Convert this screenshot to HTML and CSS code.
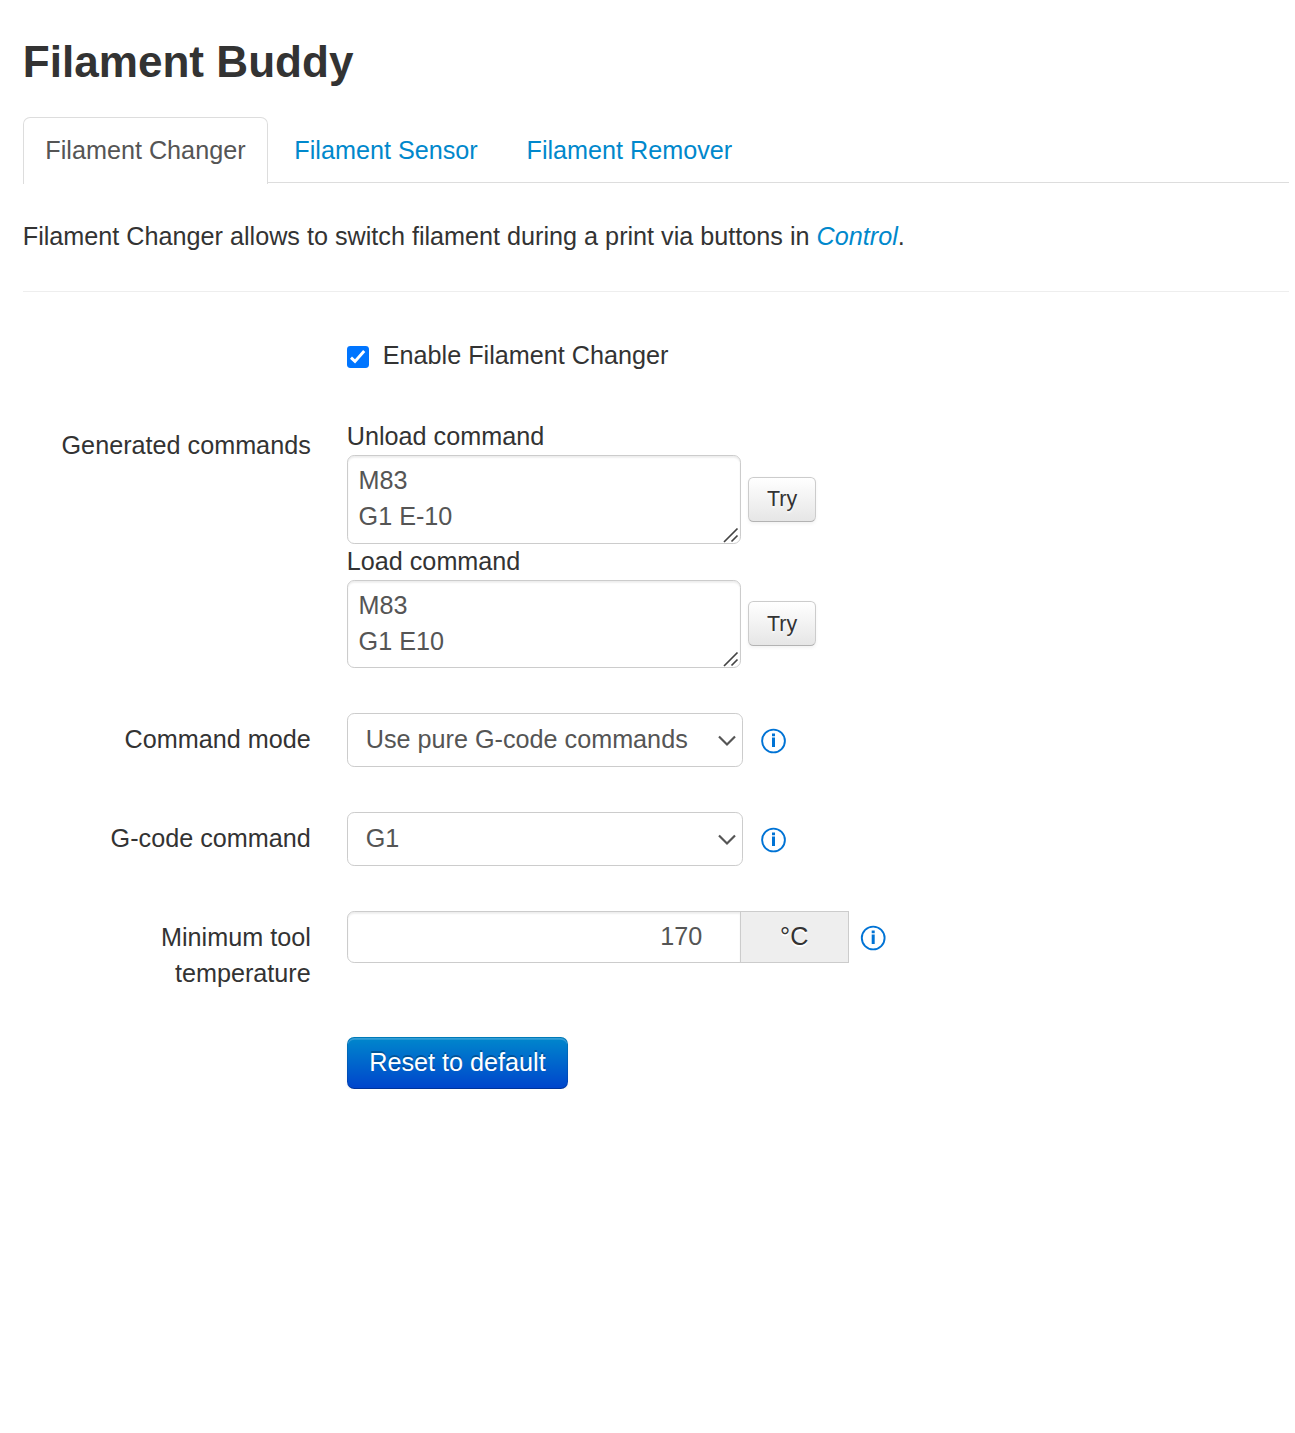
FILE: index.html
```html
<!DOCTYPE html>
<html lang="en">
<head>
<meta charset="utf-8">
<title>Filament Buddy</title>
<link rel="stylesheet" href="styles.css">
</head>
<body>
<main class="settings">
  <h3 class="title">Filament Buddy</h3>
  <ul class="tabs">
    <li><a class="tab tab-active">Filament Changer</a></li>
    <li><a class="tab">Filament Sensor</a></li>
    <li><a class="tab">Filament Remover</a></li>
  </ul>
  <p class="intro">Filament Changer allows to switch filament during a print via buttons in <a class="link">Control</a>.</p>
  <hr class="rule">
  <form class="form">
    <div class="group">
      <span class="label"></span>
      <label class="check">
        <span class="area">
          <input class="checkbox" type="checkbox" checked>
          <svg class="tick" viewBox="0 0 22 22"><path d="M4 11.6 8 15.4 17.2 5"/></svg>
        </span>
        Enable Filament Changer
      </label>
    </div>
    <div class="group">
      <span class="label">Generated commands</span>
      <div class="commands">
        <label class="caption" for="unload">Unload command</label>
        <div class="row">
          <div class="area">
            <textarea class="field textarea" id="unload" rows="2" spellcheck="false">M83
G1 E-10</textarea>
            <svg class="grip" viewBox="0 0 16 16"><path d="M1 15 14.5 1.5M8.5 14.5 14.5 8.5"/></svg>
          </div>
          <button class="btn" type="button">Try</button>
        </div>
        <label class="caption" for="load">Load command</label>
        <div class="row">
          <div class="area">
            <textarea class="field textarea" id="load" rows="2" spellcheck="false">M83
G1 E10</textarea>
            <svg class="grip" viewBox="0 0 16 16"><path d="M1 15 14.5 1.5M8.5 14.5 14.5 8.5"/></svg>
          </div>
          <button class="btn" type="button">Try</button>
        </div>
      </div>
    </div>
    <div class="group">
      <label class="label" for="mode">Command mode</label>
      <div class="row">
        <div class="area">
          <select class="field select" id="mode"><option>Use pure G-code commands</option></select>
          <svg class="chevron" viewBox="0 0 18 12"><path d="M1 1.5 9 9.5 17 1.5"/></svg>
        </div>
        <svg class="info" viewBox="0 0 26 26"><circle cx="13.5" cy="13" r="11.4"/><path d="M12 5.6h3v2.6h-3zM12 9.6h3V19h-3z"/></svg>
      </div>
    </div>
    <div class="group">
      <label class="label" for="gcode">G-code command</label>
      <div class="row">
        <div class="area">
          <select class="field select" id="gcode"><option>G1</option></select>
          <svg class="chevron" viewBox="0 0 18 12"><path d="M1 1.5 9 9.5 17 1.5"/></svg>
        </div>
        <svg class="info" viewBox="0 0 26 26"><circle cx="13.5" cy="13" r="11.4"/><path d="M12 5.6h3v2.6h-3zM12 9.6h3V19h-3z"/></svg>
      </div>
    </div>
    <div class="group">
      <label class="label" for="temp">Minimum tool temperature</label>
      <div class="row row-top">
        <input class="field number" id="temp" value="170">
        <span class="addon">°C</span>
        <svg class="info info-near" viewBox="0 0 26 26"><circle cx="13.2" cy="13" r="11.4"/><path d="M11.7 5.6h3v2.6h-3zM11.7 9.6h3V19h-3z"/></svg>
      </div>
    </div>
    <div class="group">
      <span class="label"></span>
      <button class="btn btn-primary" type="button">Reset to default</button>
    </div>
  </form>
</main>
</body>
</html>
```
FILE: styles.css
```css
* { box-sizing: border-box; }

body {
  margin: 0;
  background: #fff;
  color: #333;
  font: 25.2px/36px "Liberation Sans", Arial, sans-serif;
}

.settings { padding: 26px 6px 0 22.75px; }

.title {
  margin: 0 0 19px;
  font-size: 44.1px;
  line-height: 72px;
}

.tabs {
  display: flex;
  height: 66px;
  margin: 0 0 35px;
  padding: 0;
  list-style: none;
  border-bottom: 1px solid #ddd;
}

.tab {
  display: block;
  height: 67px;
  margin-right: 3.6px;
  padding: 14.4px 21.6px;
  border: 1px solid transparent;
  border-radius: 7.2px 7.2px 0 0;
  color: #08c;
}

.tab-active {
  background: #fff;
  border-color: #ddd;
  border-bottom: 0;
  color: #555;
}

.intro { margin: 0; }

.link {
  color: #08c;
  font-style: italic;
}

.rule {
  height: 2px;
  margin: 37px 0 36px;
  border: 0;
  border-top: 1px solid #eee;
}

.form {
  display: flex;
  flex-direction: column;
  gap: 36px;
}

.group {
  display: grid;
  grid-template-columns: 288px 1fr;
  column-gap: 36px;
  align-items: start;
  justify-items: start;
}

.label {
  justify-self: end;
  padding: 8px 0 10px;
  text-align: right;
}

.check {
  display: flex;
  align-items: center;
  gap: 14px;
  padding: 8px 0 10px;
}

.area { position: relative; }

.checkbox {
  display: block;
  width: 22px;
  height: 22px;
  margin: 4px 0 0;
  appearance: none;
  border-radius: 3.4px;
  background: #0075ff;
}

.tick {
  position: absolute;
  left: 0;
  bottom: 0;
  width: 22px;
  height: 22px;
  fill: none;
  stroke: #fff;
  stroke-width: 2.9;
  pointer-events: none;
}

.commands { padding-bottom: 9px; }

.caption {
  display: block;
  margin: -1px 0 1px;
}

.row {
  display: flex;
  align-items: center;
}

.row-top { align-items: flex-start; }

.field {
  display: block;
  margin: 0;
  border: 1px solid #ccc;
  border-radius: 7.2px;
  background: #fff;
  box-shadow: inset 0 1.8px 1.8px rgba(0, 0, 0, .075);
  color: #555;
  font: inherit;
}

.textarea {
  width: 394px;
  height: 88.6px;
  padding: 6.2px 10.8px;
  overflow: hidden;
  resize: none;
}

.grip {
  position: absolute;
  right: 1.6px;
  bottom: 1px;
  width: 16px;
  height: 16px;
  fill: none;
  stroke: #444;
  stroke-width: 1.7;
}

.select {
  width: 396px;
  height: 54px;
  margin-bottom: 9px;
  padding: 0 18px 2px;
  appearance: none;
  box-shadow: none;
}

.chevron {
  position: absolute;
  right: 6.6px;
  top: 21.5px;
  width: 18px;
  height: 12px;
  fill: none;
  stroke: #555;
  stroke-width: 2.2;
  pointer-events: none;
}

.info {
  width: 26px;
  height: 26px;
  margin: -7px 0 0 17.5px;
  fill: #0073d5;
}

.info circle {
  fill: none;
  stroke: #0073d5;
  stroke-width: 1.9;
}

.info-near { margin: 14px 0 0 11.4px; }

.number {
  width: 394px;
  height: 52px;
  padding: 0 37.6px 2px 10px;
  border-radius: 7.2px 0 0 7.2px;
  text-align: right;
}

.addon {
  width: 109px;
  height: 52px;
  margin-left: -1px;
  padding-top: 6px;
  border: 1px solid #ccc;
  background: #eee;
  text-align: center;
  text-shadow: 0 1.8px 0 #fff;
}

.btn {
  width: 68px;
  height: 45px;
  margin: 0 0 0 7.4px;
  padding: 0;
  border: 1px solid #ccc;
  border-bottom-color: #b3b3b3;
  border-radius: 5.4px;
  background: linear-gradient(#fff, #e6e6e6);
  box-shadow: inset 0 1.8px 0 rgba(255, 255, 255, .2), 0 1.8px 3.6px rgba(0, 0, 0, .05);
  color: #333;
  font: 21.42px/36px "Liberation Sans", Arial, sans-serif;
  text-shadow: 0 1.8px 1.8px rgba(255, 255, 255, .75);
}

.btn-primary {
  width: 221px;
  height: 52px;
  margin: 0;
  padding: 0 0 2px 0.5px;
  border-color: rgba(0, 0, 0, .1) rgba(0, 0, 0, .1) rgba(0, 0, 0, .25);
  border-radius: 7.2px;
  background: linear-gradient(#08c, #04c) border-box;
  color: #fff;
  font-size: 25.2px;
  text-shadow: 0 -1.8px 0 rgba(0, 0, 0, .25);
}
```
